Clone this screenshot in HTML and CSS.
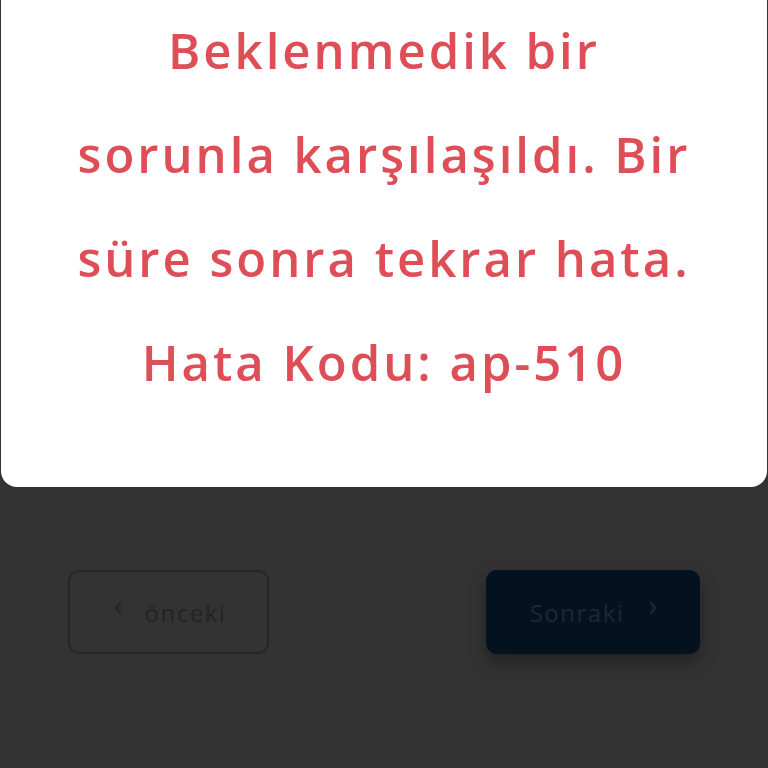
FILE: index.html
```html
<!DOCTYPE html>
<html lang="tr">
<head>
<meta charset="utf-8">
<link rel="stylesheet" href="styles.css">
</head>
<body>
<div class="card">
  <p class="message">Beklenmedik bir<br>sorunla karşılaşıldı. Bir<br>süre sonra tekrar hata.<br>Hata Kodu: ap-510</p>
</div>
<div class="nav">
  <button class="btn btn-prev">
    <svg class="chev" viewBox="0 0 10 16" width="10" height="16"><path d="M7 3 L3 8 L7 13" fill="none" stroke="currentColor" stroke-width="2.2" stroke-linecap="round" stroke-linejoin="round"/></svg>
    <span>önceki</span>
  </button>
  <button class="btn btn-next">
    <span>Sonraki</span>
    <svg class="chev" viewBox="0 0 10 16" width="10" height="16"><path d="M3 3 L7 8 L3 13" fill="none" stroke="currentColor" stroke-width="2.2" stroke-linecap="round" stroke-linejoin="round"/></svg>
  </button>
</div>
</body>
</html>
```
FILE: styles.css
```css
html, body {
  margin: 0;
  padding: 0;
}
body {
  background: #333333;
  width: 768px;
  height: 768px;
  overflow: hidden;
  font-family: "Open Sans", "Liberation Sans", sans-serif;
}
.card {
  background: #ffffff;
  border-radius: 0 0 16px 16px;
  margin: 0 1px;
  height: 487px;
  box-sizing: border-box;
  padding: 0 20px;
  display: flex;
  justify-content: center;
}
.message {
  margin: -2px 0 0;
  color: #de4e57;
  font-size: 49px;
  font-weight: 600;
  line-height: 104px;
  letter-spacing: 3px;
  text-align: center;
  white-space: nowrap;
}
.nav {
  display: flex;
  justify-content: space-between;
  padding: 83px 68px 0 68px;
}
.btn {
  height: 84px;
  border-radius: 11px;
  font-family: "Open Sans", "Liberation Sans", sans-serif;
  font-size: 24px;
  letter-spacing: 1.5px;
  display: flex;
  align-items: center;
  justify-content: center;
  gap: 22px;
  box-sizing: border-box;
}
.btn-prev {
  width: 201px;
  background: transparent;
  border: 2px solid #262626;
  color: #232323;
  padding-right: 4px;
}
.btn-next {
  width: 214px;
  background: #04121f;
  border: none;
  color: #1c2836;
  gap: 24px;
  box-shadow: 0 8px 18px rgba(0, 0, 0, 0.35);
  padding-left: 8px;
}
.chev {
  display: block;
  margin-top: -8px;
}
```
